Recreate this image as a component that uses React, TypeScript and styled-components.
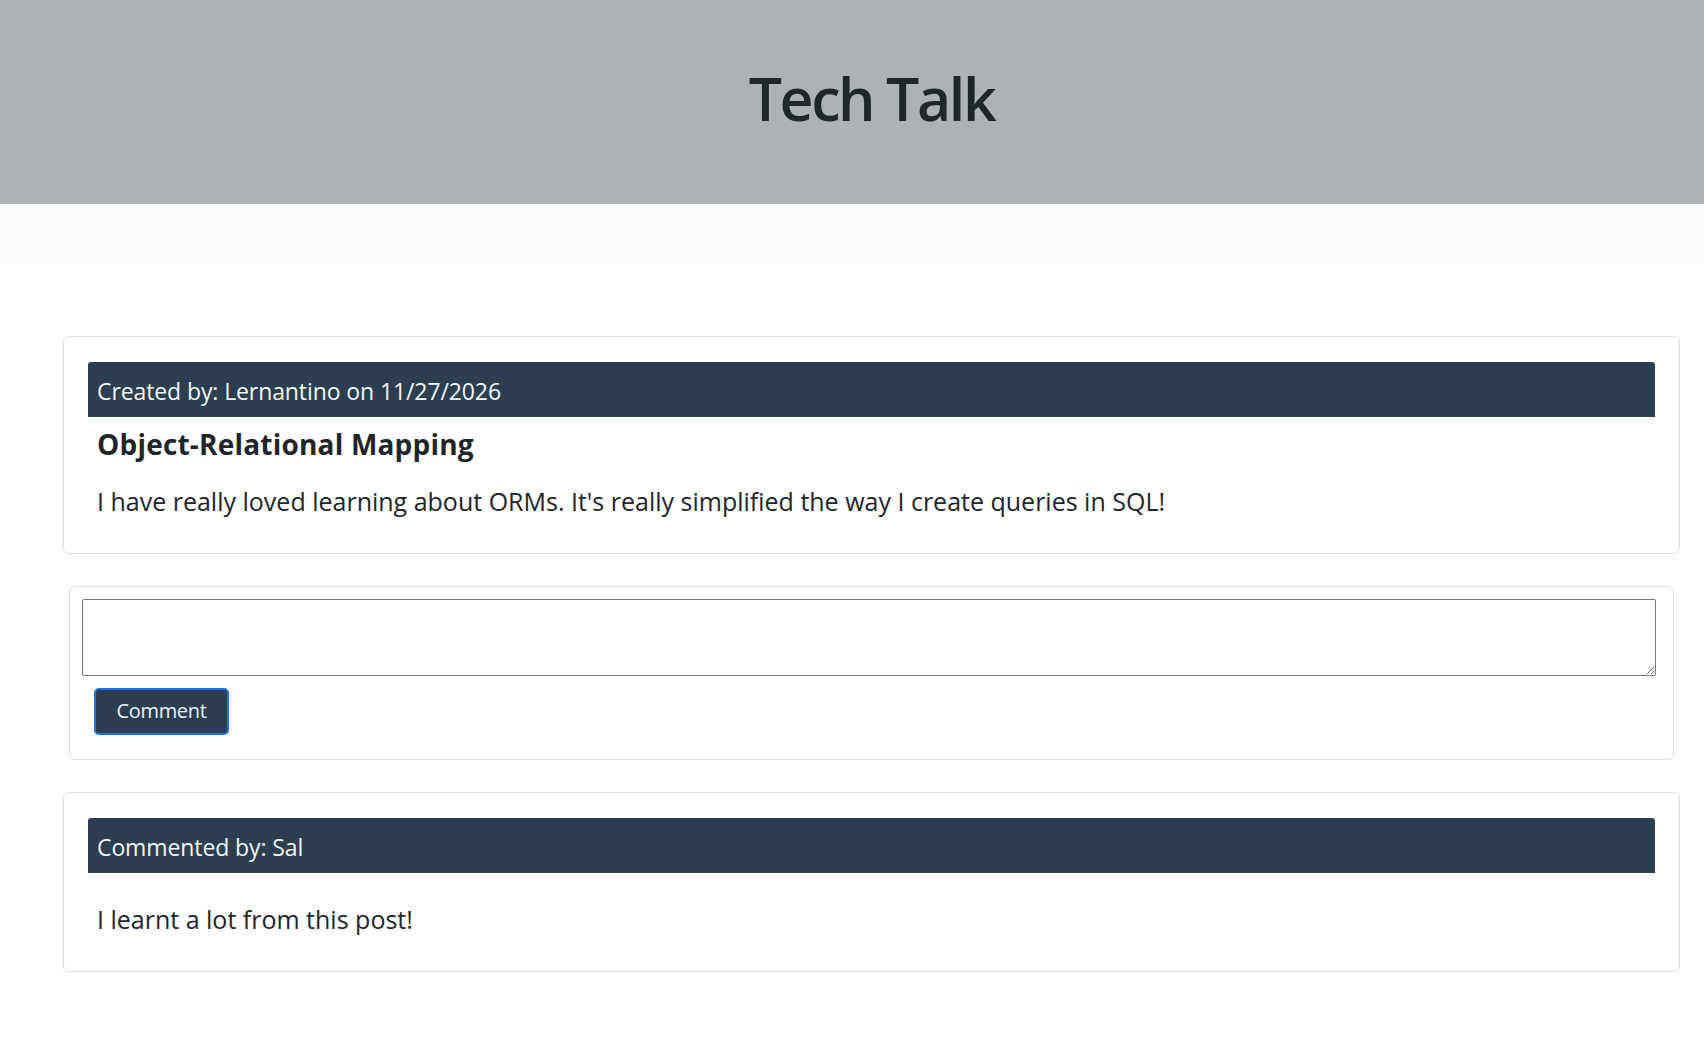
import React from "react";
import styled, { createGlobalStyle } from "styled-components";

const GlobalStyle = createGlobalStyle`
  * { box-sizing: border-box; }
  html, body { margin: 0; padding: 0; background: #ffffff; }
  body {
    font-family: "Open Sans", "Noto Sans", "Liberation Sans", sans-serif;
    color: #212529;
    -webkit-font-smoothing: antialiased;
  }
`;

const Page = styled.div`
  display: flex;
  flex-direction: column;
  min-height: 1063px;
`;

const Banner = styled.header`
  height: 204px;
  background: #adb2b6;
  display: flex;
  align-items: center;
  justify-content: center;
  padding: 0 24px 0 63px;
`;

const SiteTitle = styled.h1`
  margin: 0;
  font-size: 59px;
  font-weight: 600;
  line-height: 72px;
  color: #1f2728;
  letter-spacing: -2.4px;
  padding-bottom: 9px;
`;

const NavBand = styled.nav`
  height: 60px;
  background: #f8f9fa;
`;

const Main = styled.main`
  display: flex;
  flex-direction: column;
  gap: 32px;
  padding: 72px 24px 40px 63px;
`;

const Card = styled.section<{ $bottom: number }>`
  border: 1px solid #dedede;
  border-radius: 6px;
  background: #fff;
  padding: 25px 24px ${(p) => p.$bottom}px 24px;
`;

const CardHeader = styled.div`
  height: 55px;
  background: #2c3e50;
  color: #f3f7f9;
  border-radius: 3px 3px 0 0;
  padding: 11px 9px 0 9px;
  font-size: 23px;
  line-height: 36px;
  letter-spacing: -0.1px;
`;

const PostTitle = styled.h5`
  margin: 10px 0 0 9px;
  font-size: 28px;
  font-weight: 700;
  line-height: 34px;
  letter-spacing: 0.2px;
  color: #212529;
`;

const BodyText = styled.p<{ $top: number }>`
  margin: ${(p) => p.$top}px 0 0 9px;
  font-size: 25px;
  line-height: 37.5px;
  color: #212529;
`;

const CommentCard = styled.form`
  border: 1px solid #dedede;
  border-radius: 6px;
  background: #fff;
  margin: 0 6px;
  padding: 12px 17px 24px 12px;
  display: flex;
  flex-direction: column;
  align-items: flex-start;
  gap: 12px;
`;

const CommentBox = styled.textarea`
  width: 100%;
  height: 77px;
  border: 1px solid #767676;
  border-radius: 2px;
  margin: 0;
  padding: 4px;
  font-family: inherit;
  font-size: 20px;
  resize: vertical;
  display: block;
`;

const SubmitButton = styled.button`
  margin-left: 12px;
  width: 135px;
  height: 47px;
  background: #2c3e50;
  color: #eaf3f6;
  border: 2px solid #1f6fe6;
  border-radius: 5px;
  font-family: inherit;
  font-size: 20px;
  letter-spacing: -0.3px;
  line-height: 1;
  display: flex;
  align-items: center;
  justify-content: center;
  padding: 0;
  cursor: pointer;
`;

export default function App() {
  return (
    <Page>
      <GlobalStyle />
      <Banner>
        <SiteTitle>Tech Talk</SiteTitle>
      </Banner>
      <NavBand />
      <Main>
        <Card $bottom={32}>
          <CardHeader>Created by: Lernantino on 11/27/2026</CardHeader>
          <PostTitle>Object-Relational Mapping</PostTitle>
          <BodyText $top={22}>
            I have really loved learning about ORMs. It's really simplified the way I create queries in SQL!
          </BodyText>
        </Card>
        <CommentCard onSubmit={(e) => e.preventDefault()}>
          <CommentBox aria-label="Comment" />
          <SubmitButton type="submit">Comment</SubmitButton>
        </CommentCard>
        <Card $bottom={33}>
          <CardHeader>Commented by: Sal</CardHeader>
          <BodyText $top={28}>I learnt a lot from this post!</BodyText>
        </Card>
      </Main>
    </Page>
  );
}
